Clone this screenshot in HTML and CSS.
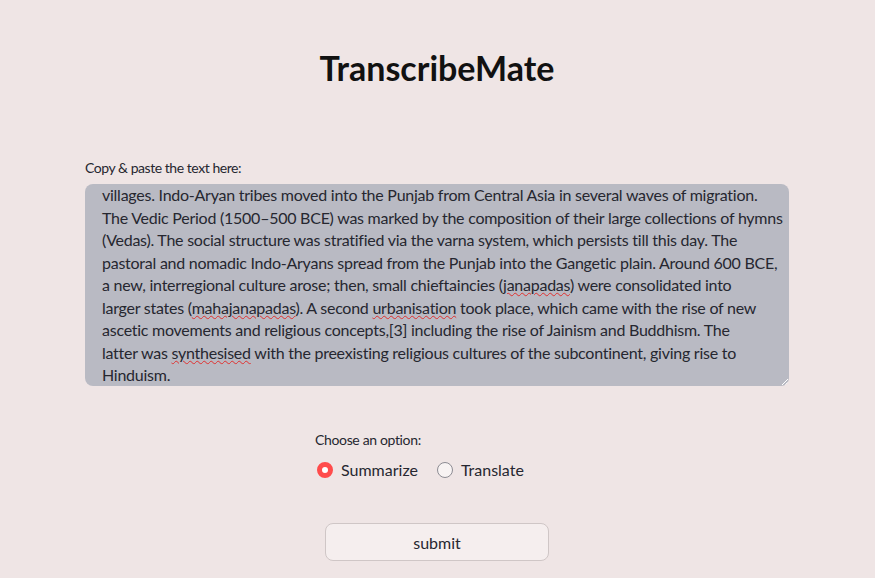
FILE: index.html
```html
<!DOCTYPE html>
<html>
<head>
<meta charset="utf-8">
<link rel="stylesheet" href="styles.css">
</head>
<body>
<main class="app">
  <h1 class="title">TranscribeMate</h1>
  <label class="label">Copy &amp; paste the text here:</label>
  <div class="textarea">
    <div class="text">
      <div class="ln">villages. Indo-Aryan tribes moved into the Punjab from Central Asia in several waves of migration.</div>
      <div class="ln">The Vedic Period (1500–500 BCE) was marked by the composition of their large collections of hymns</div>
      <div class="ln">(Vedas). The social structure was stratified via the varna system, which persists till this day. The</div>
      <div class="ln">pastoral and nomadic Indo-Aryans spread from the Punjab into the Gangetic plain. Around 600 BCE,</div>
      <div class="ln">a new, interregional culture arose; then, small chieftaincies (<span class="sp">janapadas</span>) were consolidated into</div>
      <div class="ln">larger states (<span class="sp">mahajanapadas</span>). A second <span class="sp">urbanisation</span> took place, which came with the rise of new</div>
      <div class="ln">ascetic movements and religious concepts,[3] including the rise of Jainism and Buddhism. The</div>
      <div class="ln">latter was <span class="sp">synthesised</span> with the preexisting religious cultures of the subcontinent, giving rise to</div>
      <div class="ln">Hinduism.</div>
    </div>
    <svg class="grip" width="6" height="6" viewBox="0 0 6 6"><path d="M6 0 L0 6 M6 3 L3 6" stroke="#fff" stroke-width="1"/></svg>
  </div>
  <section class="options">
    <div class="opt-label">Choose an option:</div>
    <div class="radios">
      <div class="radio"><span class="dot on"></span><span>Summarize</span></div>
      <div class="radio"><span class="dot"></span><span>Translate</span></div>
    </div>
  </section>
  <div class="btn-row">
    <button class="btn">submit</button>
  </div>
</main>
</body>
</html>
```
FILE: styles.css
```css
* { box-sizing: border-box; }
html, body { margin: 0; padding: 0; }
body {
  background: #efe5e5;
  font-family: "Source Sans Pro", Lato, "Noto Sans", sans-serif;
  color: #262730;
  width: 875px;
  height: 578px;
  overflow: hidden;
}
.app {
  padding: 0 86px 0 85px;
  display: flex;
  flex-direction: column;
}
.title {
  margin: 46px 0 0;
  text-align: center;
  font-size: 34px;
  font-weight: 700;
  line-height: 44px;
  color: #111;
}
.label {
  margin-top: 68px;
  font-size: 14px;
  line-height: 20px;
  height: 20px;
  letter-spacing: -0.45px;
}
.textarea {
  position: relative;
  margin-top: 6px;
  height: 202px;
  background: #b9bac3;
  border-radius: 8px;
  padding: 0 4px 0 17px;
  overflow: hidden;
}
.text {
  font-size: 16px;
  line-height: 22.5px;
  color: #262730;
  letter-spacing: -0.25px;
}
.ln {
  white-space: nowrap;
}
.sp {
  text-decoration: underline wavy #e0302f;
  text-decoration-thickness: 1px;
  text-underline-offset: 1px;
}
.grip {
  position: absolute;
  right: 1px;
  bottom: 1px;
}
.options {
  margin: 44px 0 0 230px;
  display: flex;
  flex-direction: column;
}
.opt-label {
  font-size: 14px;
  line-height: 20px;
  letter-spacing: -0.35px;
}
.radios {
  display: flex;
  gap: 17px;
  margin-top: 8px;
  font-size: 16px;
}
.radio {
  display: flex;
  align-items: center;
  gap: 8px;
  line-height: 24px;
}
.dot {
  width: 16px;
  height: 16px;
  border-radius: 50%;
  border: 1px solid #8d8c93;
  background: #f8f3f3;
  display: inline-block;
  margin-left: 2px;
}
.dot.on {
  border: 5px solid #ff4b4b;
  background: #fff;
}
.btn-row {
  margin: 41px 0 0 240px;
  display: flex;
}
.btn {
  width: 224px;
  height: 38px;
  border: 1px solid #cfc6c6;
  border-radius: 8px;
  background: #f5eeee;
  font-family: inherit;
  font-size: 16px;
  color: #262730;
}
```
